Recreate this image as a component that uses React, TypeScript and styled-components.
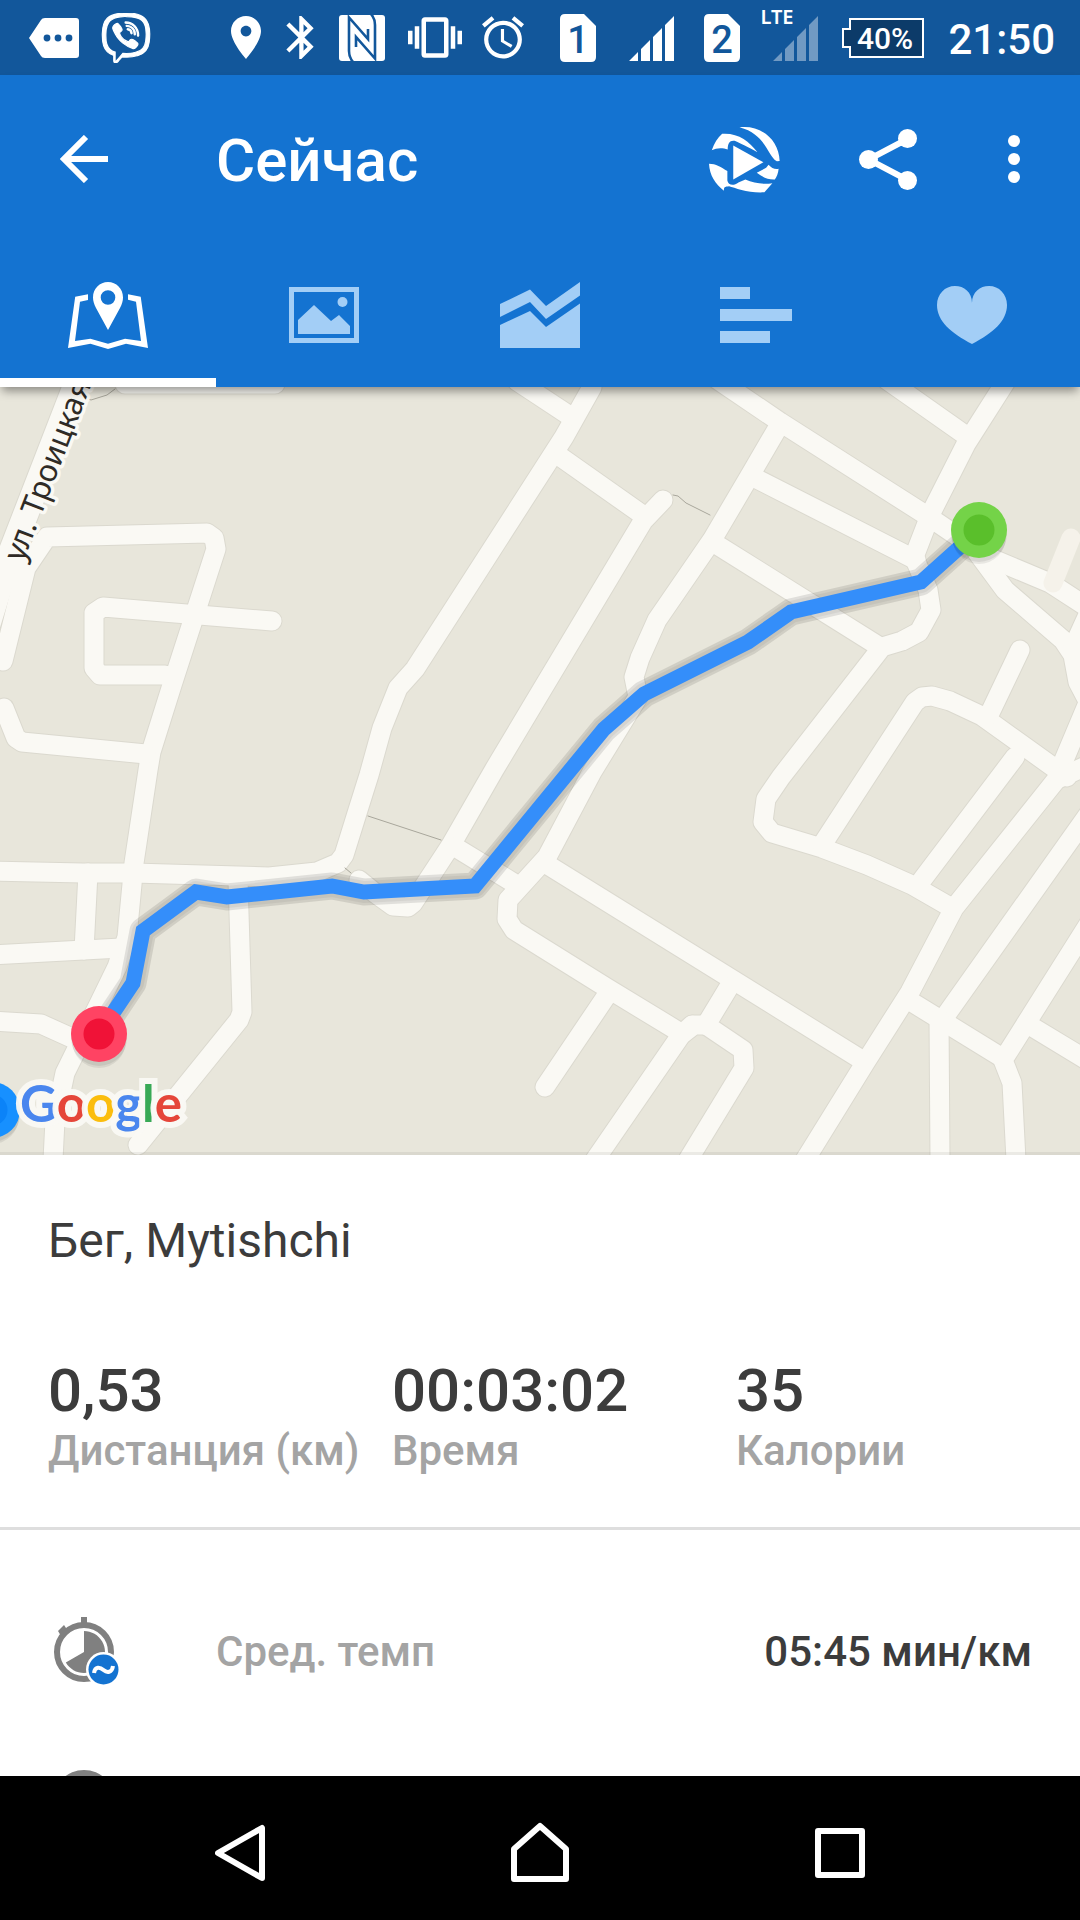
import React from "react";
import styled, { createGlobalStyle } from "styled-components";
import { FaViber } from "react-icons/fa";

const color = {
  statusBar: "#12579b",
  primary: "#1473d1",
  inactive: "#a3cef6",
  text: "#3c3c3c",
  muted: "#a4a4a4",
  divider: "#dedede",
  land: "#e8e6db",
  road: "#faf9f4",
  roadEdge: "#dbd9cf",
  route: "#348efa",
};

const GlobalStyle = createGlobalStyle`
  *, *::before, *::after { box-sizing: border-box; }
  body { margin: 0; background: #fff; font-family: Roboto, "Noto Sans", sans-serif; }
  svg { display: block; flex: none; }
`;

const Screen = styled.div`
  display: flex;
  flex-direction: column;
  height: 100vh;
  overflow: hidden;
  background: #fff;
`;

const StatusBar = styled.div`
  flex: none;
  display: flex;
  align-items: center;
  justify-content: space-between;
  height: 75px;
  padding: 0 25px 0 29px;
  background: ${color.statusBar};
  color: #fff;
`;

const StatusGroup = styled.div<{ $gap: number }>`
  display: flex;
  align-items: center;
  gap: ${(p) => p.$gap}px;
`;

const SignalBox = styled.span`
  position: relative;
`;

const NetworkLabel = styled.span`
  position: absolute;
  top: -9px;
  left: -10px;
  font: 600 20px/24px "Noto Sans", sans-serif;
`;

const Clock = styled.time`
  padding-top: 4px;
  font-size: 42px;
  line-height: 48px;
  font-weight: 500;
`;

const Header = styled.header`
  flex: none;
  position: relative;
  z-index: 1;
  background: ${color.primary};
  color: #fff;
  box-shadow: 0 6px 9px -2px rgba(0, 0, 0, 0.4);
`;

const Toolbar = styled.div`
  display: flex;
  align-items: center;
  height: 168px;
  padding: 0 12px 0 48px;
`;

const IconButton = styled.button<{ $width: number }>`
  display: flex;
  align-items: center;
  justify-content: center;
  width: ${(p) => p.$width}px;
  height: 96px;
  padding: 0;
  border: 0;
  background: none;
  color: inherit;
`;

const Title = styled.h1`
  flex: 1;
  margin: 0;
  padding: 4px 0 0 96px;
  font-size: 60px;
  line-height: 72px;
  font-weight: 500;
`;

const Tabs = styled.nav`
  display: grid;
  grid-template-columns: repeat(5, 1fr);
`;

const Tab = styled.button<{ $active?: boolean }>`
  display: flex;
  align-items: center;
  justify-content: center;
  height: 144px;
  padding: 9px 0 0;
  border: 0;
  border-bottom: 9px solid ${(p) => (p.$active ? "#fff" : "transparent")};
  background: none;
  color: ${(p) => (p.$active ? "#fff" : color.inactive)};
`;

const MapPanel = styled.section`
  flex: none;
  position: relative;
  overflow: hidden;
  height: 768px;
  background: ${color.land};

  &::after {
    content: "";
    position: absolute;
    inset: auto 0 0;
    height: 3px;
    background: rgba(0, 0, 0, 0.06);
  }
`;

const MapDrawing = styled.svg`
  width: 100%;
  height: 768px;
`;

const MapLogo = styled.a`
  position: absolute;
  left: 20px;
  bottom: 22px;
  font: 700 51px/60px Lato, sans-serif;
  text-decoration: none;
  -webkit-text-stroke: 12px rgba(250, 249, 244, 0.95);
  paint-order: stroke fill;
`;

const Letter = styled.span<{ $color: string }>`
  color: ${(p) => p.$color};
`;

const Summary = styled.section`
  flex: none;
  padding: 56px 0 52px 48px;
  border-bottom: 3px solid ${color.divider};
`;

const Activity = styled.h2`
  margin: 0 0 84px;
  font-size: 48px;
  line-height: 60px;
  font-weight: 400;
  color: ${color.text};
`;

const Metrics = styled.dl`
  display: grid;
  grid-template-columns: repeat(3, 1fr);
  margin: 0;
`;

const Metric = styled.div`
  display: flex;
  flex-direction: column-reverse;
  font-weight: 500;
  white-space: nowrap;
`;

const MetricLabel = styled.dt`
  font-size: 42px;
  line-height: 48px;
  color: ${color.muted};
`;

const MetricValue = styled.dd`
  margin: 0;
  font-size: 60px;
  line-height: 72px;
  color: ${color.text};
`;

const Details = styled.ul`
  flex: 1 1 0;
  min-height: 0;
  overflow: hidden;
  margin: 0;
  padding: 50px 0 0;
  list-style: none;
`;

const DetailRow = styled.li`
  display: grid;
  grid-template-columns: 168px 1fr auto;
  align-items: center;
  height: 144px;
  padding: 0 48px;
  font-size: 42px;
  line-height: 48px;
  font-weight: 500;
  color: ${color.text};
`;

const DetailLabel = styled.span`
  color: ${color.muted};
`;

const SystemNav = styled.nav`
  flex: none;
  display: grid;
  grid-template-columns: repeat(3, 1fr);
  align-items: center;
  justify-items: center;
  height: 144px;
  padding: 10px 90px 0;
  background: #000;
  color: #fff;
`;

function SimIcon({ slot }: { slot: string }) {
  return (
    <svg width="36" height="48" viewBox="0 0 36 48">
      <path d="M5 0H24L36 12V43q0 5-5 5H5q-5 0-5-5V5q0-5 5-5z" fill="#fff" />
      <text x="18" y="39" fontSize="38" fontWeight="500" textAnchor="middle" fill={color.statusBar}>
        {slot}
      </text>
    </svg>
  );
}

function SignalIcon({ opacity = 1 }: { opacity?: number }) {
  return (
    <svg width="48" height="47" viewBox="-3 -2 48 47" fill="#fff" opacity={opacity}>
      <path d="M0 45L9 36V45zM12 33L21 24V45H12zM24 21L33 12V45H24zM36 9L45 0V45H36z" />
    </svg>
  );
}

const roads = [
  // western blocks
  "M3 661L26 568L47 537L207 533L214 538L216 549L172 685L151 752L148 770L134 863L127 937L117 967L98 1006L65 1073L55 1120L53 1160",
  "M272 621L103 607L94 613L94 668L100 675L165 675",
  "M4 708L16 738L22 742L146 754",
  "M592 387L564 437L415 669L398 688L382 728L369 775L358 810L344 855L338 863L317 872L269 877L133 873L83 873L-10 871",
  "M663 500L643 521L540 693L494 770L451 845L413 903L408 907L393 906L375 893L359 880",
  "M88 873L84 950",
  "M-10 955L121 948",
  "M-10 1021L41 1024L72 1038",
  "M238 880L242 1012L239 1020L138 1145",
  "M125 384L275 384",
  // central blocks
  "M517 381L570 416",
  "M562 458L640 513",
  "M455 847L517 885",
  "M718 380L780 422L929 517L988 557L1050 583L1090 609",
  "M780 424L752 472L712 540L657 620L640 658L634 677L638 697L592 772L547 857L508 900L507 919L514 930L607 988L676 1030",
  "M755 478L916 560",
  "M714 543L880 647",
  "M1008 378L966 444L931 513L914 557L928 590L931 610L919 632L902 641L882 647L781 777L766 799L763 822L772 833L822 848L867 865L912 885L952 908",
  "M887 380L968 437",
  "M543 862L862 1060",
  "M729 987L706 1025L743 1050L744 1068L688 1160",
  "M706 1025L694 1025L681 1035L595 1160",
  "M681 1035L692 1025",
  "M607 995L545 1087",
  // eastern blocks
  "M977 552L1005 590L1063 640L1073 655L1078 682L1090 705",
  "M1092 606L1072 650",
  "M822 845L915 702L922 697L932 696L950 701L982 716L1067 777",
  "M1020 650L989 715",
  "M1015 757L922 880",
  "M1088 703L1064 760L1060 775L954 908L910 992L865 1063L805 1160",
  "M1060 778L1090 764",
  "M1090 812L946 1015",
  "M910 1001L1001 1057",
  "M1090 922L1003 1060L1012 1083L1016 1160",
  "M1029 1025L1090 1062",
  "M939 1018L940 1160",
];

const route =
  "M979 530L921 582L791 612L748 642L644 694L604 729L475 886L364 892L332 886L227 897L196 892L143 931L133 983L99 1034";

const markers = [
  { x: 979, y: 530, outer: "#74d348", inner: "#5abf2b" },
  { x: 99, y: 1034, outer: "#ff4363", inner: "#f01237" },
  { x: -8, y: 1110, outer: "#1790ff", inner: "#0b83f8" },
];

function RouteMap() {
  return (
    <MapDrawing viewBox="0 387 1080 768" preserveAspectRatio="xMidYMid slice" role="img" aria-label="Маршрут">
      <g fill="none" strokeLinejoin="round" strokeLinecap="round">
        <path d="M75 387L8 560L-14 630" stroke={color.roadEdge} strokeWidth="27" />
        {roads.map((d, i) => (
          <path key={i} d={d} stroke={color.roadEdge} strokeWidth="21" />
        ))}
        <path d="M75 387L8 560L-14 630" stroke={color.road} strokeWidth="25" />
        {roads.map((d, i) => (
          <path key={i} d={d} stroke={color.road} strokeWidth="19" />
        ))}
        <path d="M1071 538L1053 583" stroke="#f5f2ea" strokeWidth="19" />
        <path
          d="M115 389L107 395L91 400L83 397M673 495L678 496L686 503L710 515M368 816L441 840M345 868L351 873"
          stroke="#a9a79c"
          strokeWidth="1"
        />
      </g>
      <text
        transform="translate(23 563) rotate(-69)"
        fontFamily="Noto Sans, sans-serif"
        fontSize="31"
        fill="#2f2b26"
        stroke={color.road}
        strokeWidth="7"
        strokeLinejoin="round"
        paintOrder="stroke"
      >
        ул. Троицкая
      </text>
      <g fill="none" strokeLinejoin="round">
        <path d={route} stroke="#000" strokeOpacity="0.1" strokeWidth="27" />
        <path d={route} stroke="#000" strokeOpacity="0.05" strokeWidth="22" />
        <path d={route} stroke={color.route} strokeWidth="15" strokeLinejoin="miter" />
      </g>
      {markers.map((m) => (
        <g key={m.outer}>
          <circle cx={m.x} cy={m.y + 7} r="27" fill="#000" opacity="0.07" />
          <circle cx={m.x} cy={m.y + 4} r="28" fill="#000" opacity="0.07" />
          <circle cx={m.x} cy={m.y} r="28" fill={m.outer} />
          <circle cx={m.x} cy={m.y} r="15.5" fill={m.inner} />
        </g>
      ))}
    </MapDrawing>
  );
}

const metrics = [
  { label: "Дистанция (км)", value: "0,53" },
  { label: "Время", value: "00:03:02" },
  { label: "Калории", value: "35" },
];

const logo: [string, string][] = [
  ["G", "#4a86ee"],
  ["o", "#e5463a"],
  ["o", "#fbbd0d"],
  ["g", "#4a86ee"],
  ["l", "#38a956"],
  ["e", "#e5463a"],
];

export default function App() {
  return (
    <Screen>
      <GlobalStyle />
      <StatusBar>
        <StatusGroup $gap={22}>
          <svg width="50" height="40" viewBox="0 0 50 40">
            <path d="M0 20L12 2q1-2 4-2H47q3 0 3 3V37q0 3-3 3H16q-3 0-4-2z" fill="#fff" />
            <g fill={color.statusBar}>
              <circle cx="18" cy="20" r="3.4" />
              <circle cx="29" cy="20" r="3.4" />
              <circle cx="40" cy="20" r="3.4" />
            </g>
          </svg>
          <FaViber size={50} stroke="#fff" strokeWidth={12} />
        </StatusGroup>
        <StatusGroup $gap={24}>
          <StatusGroup $gap={36}>
            <StatusGroup $gap={20}>
              <svg width="36" height="43" viewBox="3.6 2 16.8 20" fill="#fff">
                <path d="M12 2C8.13 2 5 5.13 5 9c0 5.25 7 13 7 13s7-7.75 7-13c0-3.87-3.13-7-7-7zm0 9.5c-1.38 0-2.5-1.12-2.5-2.5s1.12-2.5 2.5-2.5 2.5 1.12 2.5 2.5-1.12 2.5-2.5 2.5z" />
              </svg>
              <svg width="32" height="43" viewBox="3.9 2 14.9 20" fill="#fff">
                <path d="M17.71 7.71L12 2h-1v7.59L6.41 5 5 6.41 10.59 12 5 17.59 6.41 19 11 14.41V22h1l5.71-5.71-4.3-4.29 4.3-4.29zM13 5.83l1.88 1.88L13 9.59V5.83zm1.88 10.46L13 18.17v-3.76l1.88 1.88z" />
              </svg>
              <svg width="52" height="46" viewBox="-3 0 52 46">
                <rect width="46" height="46" rx="3" fill="#fff" />
                <g fill="none" stroke={color.statusBar} strokeWidth="2.6">
                  <path d="M14 47C10.500 43 10 40 10 36V2.500L29 24V14" />
                  <path d="M32 -1C35.500 3 36 6 36 10V43.500L17 22V32" />
                </g>
              </svg>
              <svg width="54" height="41" viewBox="0 3 24 18" fill="#fff">
                <path d="M0 15h2V9H0v6zm3 2h2V7H3v10zm19-8v6h2V9h-2zm-3 8h2V7h-2v10zM16.500 3h-9C6.670 3 6 3.670 6 4.500v15c0 .83.67 1.500 1.500 1.500h9c.83 0 1.500-.67 1.500-1.500v-15c0-.83-.67-1.500-1.500-1.500zM16 19H8V5h8v14z" />
              </svg>
              <svg width="42" height="43" viewBox="2 2 20 20" fill="#fff">
                <path d="M22 5.720l-4.600-3.860-1.290 1.530 4.600 3.860L22 5.720zM7.880 3.390L6.600 1.860 2 5.710l1.290 1.530 4.590-3.850zM12.500 8H11v6l4.750 2.850.75-1.230-4-2.370V8zM12 4c-4.970 0-9 4.030-9 9s4.020 9 9 9c4.970 0 9-4.030 9-9s-4.030-9-9-9zm0 16c-3.870 0-7-3.130-7-7s3.130-7 7-7 7 3.130 7 7-3.130 7-7 7z" />
              </svg>
            </StatusGroup>
            <StatusGroup $gap={30}>
              <SimIcon slot="1" />
              <SignalIcon />
              <SimIcon slot="2" />
              <SignalBox>
                <NetworkLabel>LTE</NetworkLabel>
                <SignalIcon opacity={0.4} />
              </SignalBox>
            </StatusGroup>
          </StatusGroup>
          <svg width="82" height="40" viewBox="0 0 82 40">
            <path d="M8 1H81V39H8V29H1V11H8z" fill="#0c3b69" stroke="#fff" strokeWidth="2" />
            <text x="43" y="31" fontSize="30" fontWeight="500" textAnchor="middle" fill="#fff">
              40%
            </text>
          </svg>
          <Clock>21:50</Clock>
        </StatusGroup>
      </StatusBar>

      <Header>
        <Toolbar>
          <IconButton $width={72} aria-label="Назад">
            <svg width="48" height="48" viewBox="0 0 48 48" fill="none" stroke="#fff" strokeWidth="6">
              <path d="M26 2L4 24L26 46M4 24H48" />
            </svg>
          </IconButton>
          <Title>Сейчас</Title>
          <IconButton $width={144} aria-label="Воспроизвести">
            <svg width="71" height="67" viewBox="0 0 205 199" preserveAspectRatio="none" fill="#fff">
              <path d="M88 4C150-4 202 40 204 104L196 105C168 88 165 25 88 4z" />
              <path d="M8 72C15 52 25 34 38 23C85 20 115 45 140 78C112 62 92 52 74 44C60 42 54 50 54 70C40 64 22 64 8 72z" />
              <path d="M70 58L157 108L70 159z" />
              <path d="M0 112C20 112 35 122 53 134V162C55 175 70 180 85 168L105 159C130 169 155 175 183 170L160 197C115 200 75 184 58 179C45 180 43 182 43 192C18 172 2 147 0 112z" />
              <path d="M138 139L165 124L172 115C180 125 190 129 201 127C200 140 195 152 190 159C170 160 155 152 138 139z" />
            </svg>
          </IconButton>
          <IconButton $width={144} aria-label="Поделиться">
            <svg width="58" height="61" viewBox="0 0 58 61" fill="#fff">
              <path d="M48.500 10L9.500 30.500L48.500 51" fill="none" stroke="#fff" strokeWidth="6" />
              <circle cx="48.500" cy="9.500" r="9.500" />
              <circle cx="9.500" cy="30.500" r="9.500" />
              <circle cx="48.500" cy="51.500" r="9.500" />
            </svg>
          </IconButton>
          <IconButton $width={108} aria-label="Ещё">
            <svg width="12" height="48" viewBox="0 0 12 48" fill="#fff">
              <circle cx="6" cy="6" r="6" />
              <circle cx="6" cy="24" r="6" />
              <circle cx="6" cy="42" r="6" />
            </svg>
          </IconButton>
        </Toolbar>
        <Tabs>
          <Tab $active aria-label="Карта">
            <svg width="80" height="67" viewBox="0 0 80 67" fill="currentColor">
              <path d="M20 12.300L7.200 14.700L0 66L22.400 61.700L40 67L58 61.700L80 66L72.700 14.700L60 12.300V17.800L68 19.700L73 59L57 56.700L40 61.700L22.400 56.700L7 59L12 19.700L20 18z" />
              <path
                fillRule="evenodd"
                d="M40 0C31.700 0 25 6.700 25 15.500C25 19 26 22 28 26L40 48L52 26C54 22 55 19 55 15.500C55 6.700 48.300 0 40 0zM40 8.200a7.300 7.300 0 1 1 0 14.600a7.300 7.300 0 1 1 0-14.600z"
              />
            </svg>
          </Tab>
          <Tab aria-label="Фото">
            <svg width="70" height="56" viewBox="0 0 70 56" fill="currentColor">
              <rect x="2.500" y="2.500" width="65" height="51" fill="none" stroke="currentColor" strokeWidth="5" />
              <circle cx="53.500" cy="15" r="5" />
              <path d="M9 47V33L25 18L42 34L50 28L61 39V47z" />
            </svg>
          </Tab>
          <Tab aria-label="Графики">
            <svg width="80" height="67" viewBox="0 0 80 67" fill="currentColor">
              <path d="M0 22L30 7.500L46 24L80 0V13.500L46 37L30 20L0 35z" />
              <path d="M0 43L30 29L46 45L80 21.500V66H0z" />
            </svg>
          </Tab>
          <Tab aria-label="Круги">
            <svg width="72" height="56" viewBox="0 0 72 56" fill="currentColor">
              <path d="M0 0H30V12H0zM0 22H72V34H0zM0 44H50V56H0z" />
            </svg>
          </Tab>
          <Tab aria-label="Пульс">
            <svg width="70" height="58" viewBox="0 0 70 58" fill="currentColor">
              <path d="M35 58C14 47 0 35 0 19C0 8 8 0 18 0C27 0 35 6 35 17C35 6 43 0 52 0C62 0 70 8 70 19C70 35 56 47 35 58z" />
            </svg>
          </Tab>
        </Tabs>
      </Header>

      <MapPanel>
        <RouteMap />
        <MapLogo href="#google" aria-label="Google">
          {logo.map(([letter, tint], i) => (
            <Letter key={i} $color={tint}>
              {letter}
            </Letter>
          ))}
        </MapLogo>
      </MapPanel>

      <Summary>
        <Activity>Бег, Mytishchi</Activity>
        <Metrics>
          {metrics.map((m) => (
            <Metric key={m.label}>
              <MetricLabel>{m.label}</MetricLabel>
              <MetricValue>{m.value}</MetricValue>
            </Metric>
          ))}
        </Metrics>
      </Summary>

      <Details>
        <DetailRow>
          <svg width="72" height="72" viewBox="-4 0 72 72">
            <circle cx="32" cy="36" r="27" fill="none" stroke="#808080" strokeWidth="6" />
            <path d="M32 36V15A21 21 0 1 1 13.800 46.500z" fill="#808080" />
            <rect x="29" y="1" width="6" height="8" fill="#808080" />
            <path d="M6 15L12 9L14 12L16 16L9 20z" fill="#808080" />
            <circle cx="51.500" cy="53.500" r="17.500" fill="#fff" />
            <circle cx="51.500" cy="53.500" r="15" fill={color.primary} />
            <path d="M42 57C43 50 48 51 51.500 54C55 57 60 57 61 50" fill="none" stroke="#fff" strokeWidth="4" />
          </svg>
          <DetailLabel>Сред. темп</DetailLabel>
          <span>05:45 мин/км</span>
        </DetailRow>
        <DetailRow>
          <svg width="72" height="72" viewBox="-4 0 72 72">
            <circle cx="32" cy="41" r="31" fill="#808080" />
          </svg>
        </DetailRow>
      </Details>

      <SystemNav>
        <IconButton $width={96} aria-label="Назад">
          <svg width="50" height="58" viewBox="0 0 50 58" fill="none" stroke="#fff" strokeWidth="6" strokeLinejoin="round">
            <path d="M3 29L47 4V54z" />
          </svg>
        </IconButton>
        <IconButton $width={96} aria-label="Домой">
          <svg width="58" height="62" viewBox="0 0 58 62" fill="none" stroke="#fff" strokeWidth="6" strokeLinejoin="round">
            <path d="M3 27L29 4L55 27V57H3z" />
          </svg>
        </IconButton>
        <IconButton $width={96} aria-label="Обзор">
          <svg width="50" height="50" viewBox="0 0 50 50" fill="none" stroke="#fff" strokeWidth="6" strokeLinejoin="round">
            <path d="M3 3H47V47H3z" />
          </svg>
        </IconButton>
      </SystemNav>
    </Screen>
  );
}
